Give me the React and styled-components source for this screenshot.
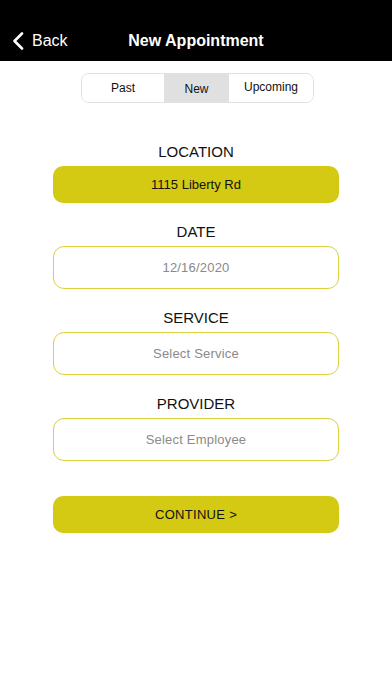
import React from "react";
import styled, { createGlobalStyle } from "styled-components";

const Global = createGlobalStyle`
  html, body { margin: 0; padding: 0; background: #fff; }
  body { font-family: "Liberation Sans", Arial, sans-serif; -webkit-font-smoothing: antialiased; }
  * { box-sizing: border-box; }
`;

const YELLOW = "#d4ca13";

const Screen = styled.div`
  width: 392px;
  min-height: 696px;
  background: #fff;
  display: flex;
  flex-direction: column;
`;

const NavBar = styled.header`
  height: 61px;
  background: #000;
  color: #fff;
  display: grid;
  grid-template-columns: 1fr auto 1fr;
  align-items: end;
  padding: 0 0 11px 12px;
`;

const BackButton = styled.div`
  display: flex;
  align-items: center;
  gap: 8px;
  font-size: 16px;
  color: #fff;
`;

const Title = styled.h1`
  margin: 0;
  font-size: 16px;
  font-weight: 700;
  color: #fff;
  transform: translateX(-6px);
`;

const SegmentWrap = styled.div`
  display: flex;
  justify-content: center;
  margin-top: 12px;
  padding-left: 3px;
`;

const Segments = styled.div`
  display: grid;
  grid-template-columns: 82px 65px 84px;
  height: 30px;
  border: 1.5px solid #e0e0e0;
  border-radius: 8px;
  overflow: hidden;
`;

const Segment = styled.div`
  display: flex;
  align-items: center;
  justify-content: center;
  font-size: 12px;
  color: #111;
  background: ${(p) => (p.$active ? "#e0e0e0" : "#fff")};
  padding-top: ${(p) => (p.$active ? "2px" : "0")};
  padding-bottom: ${(p) => (p.$up ? "3px" : "0")};
`;

const Form = styled.div`
  display: flex;
  flex-direction: column;
  align-items: center;
  padding: 0 53px;
  margin-top: 33px;
`;

const Field = styled.div`
  width: 100%;
  display: flex;
  flex-direction: column;
  align-items: center;
  margin-bottom: ${(p) => p.$gap || "0px"};
`;

const Label = styled.div`
  font-size: 15px;
  color: #111;
  height: 25px;
  padding-top: 6px;
  line-height: 19px;
  margin-bottom: 5px;
`;

const FilledButton = styled.div`
  width: 100%;
  height: 37px;
  border-radius: 10px;
  background: ${YELLOW};
  display: flex;
  align-items: center;
  justify-content: center;
  font-size: 13px;
  color: #111;
`;

const OutlineBox = styled.div`
  width: 100%;
  height: 43px;
  border-radius: 11px;
  border: 1.5px solid #dcd13c;
  background: #fff;
  display: flex;
  align-items: center;
  justify-content: center;
  font-size: 13px;
  color: #8a8a8a;
  letter-spacing: 0.2px;
`;

const Continue = styled(FilledButton)`
  margin-top: 35px;
  letter-spacing: 0.3px;
`;

const Chevron = () => (
  <svg width="12" height="18" viewBox="0 0 12 18">
    <path d="M10 1.5 L2.5 9 L10 16.5" fill="none" stroke="#fff" strokeWidth="2.6" strokeLinecap="round" strokeLinejoin="round" />
  </svg>
);

export default function App() {
  return (
    <Screen>
      <Global />
      <NavBar>
        <BackButton>
          <Chevron />
          <span>Back</span>
        </BackButton>
        <Title>New Appointment</Title>
        <div />
      </NavBar>
      <SegmentWrap>
        <Segments>
          <Segment>Past</Segment>
          <Segment $active>New</Segment>
          <Segment $up>Upcoming</Segment>
        </Segments>
      </SegmentWrap>
      <Form>
        <Field $gap="13px">
          <Label>LOCATION</Label>
          <FilledButton>1115 Liberty Rd</FilledButton>
        </Field>
        <Field $gap="13px">
          <Label>DATE</Label>
          <OutlineBox>12/16/2020</OutlineBox>
        </Field>
        <Field $gap="13px">
          <Label>SERVICE</Label>
          <OutlineBox>Select Service</OutlineBox>
        </Field>
        <Field>
          <Label>PROVIDER</Label>
          <OutlineBox>Select Employee</OutlineBox>
        </Field>
        <Continue>CONTINUE &gt;</Continue>
      </Form>
    </Screen>
  );
}
